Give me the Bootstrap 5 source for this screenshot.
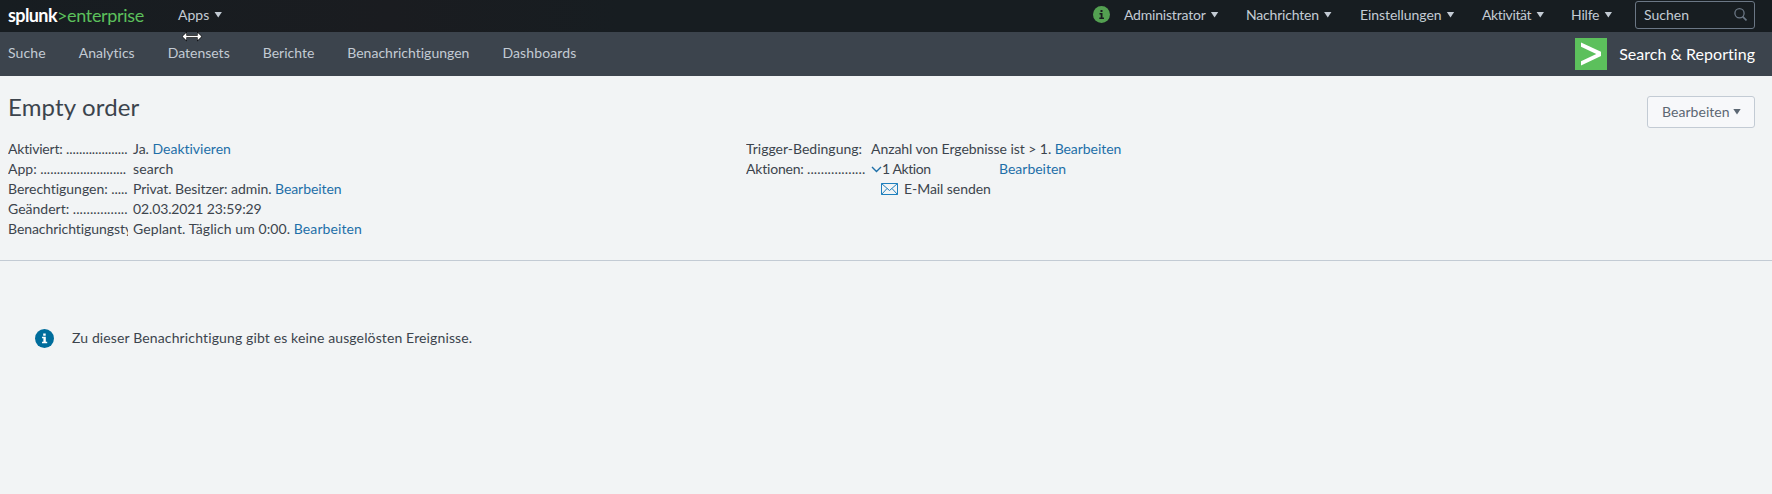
<!DOCTYPE html>
<html lang="de">
<head>
<meta charset="utf-8">
<meta name="viewport" content="width=device-width, initial-scale=1">
<title>Empty order | Splunk</title>
<link href="https://cdn.jsdelivr.net/npm/bootstrap@5.3.0/dist/css/bootstrap.min.css" rel="stylesheet">
<style>
body{font:14px/20px Lato,"Open Sans",sans-serif;font-variant-ligatures:none;color:#3c444d;background:#f2f4f5;min-height:494px;overflow:hidden}
a{color:#1e6fa8;text-decoration:none}
svg{display:block;flex:none}
.topbar{height:32px;background:#171d21;background:linear-gradient(90deg,#171d21,#1a1c20 22%,#171d21 35%);color:#c3cbd4;padding:0 17px 3px 8px;position:relative}
.appbar{height:44px;background:#3c444d;padding:0 17px 0 8px}
.appbar .nav{padding-bottom:2px}
.appbar .nav-link{color:#c3cbd4;padding:0 33px 0 0;line-height:20px}
.brand{font-size:18px;line-height:24px;color:#fff;width:170px}
.brand b{font-weight:700;letter-spacing:-.6px}
.brand span{color:#5cc05c;letter-spacing:-.32px}
.caret{width:8px;height:6px;margin-left:5px;background:currentColor;clip-path:polygon(0 0,100% 0,50% 100%)}
.tight{letter-spacing:-.2px}
.snug{letter-spacing:-.06px}
.loose{letter-spacing:.13px}
.menu-admin{width:122px}.menu-msg{width:114px}.menu-set{width:122px}.menu-act{width:89px}.menu-help{width:64px}
.search-box{width:120px;height:28px;border:1px solid #6b7785;border-radius:3px;padding:0 7px 0 8px;color:#c3cbd4}
.resize{position:absolute;left:181px;top:30px}
.app-name{font-size:16px;color:#fff;margin-left:12px;letter-spacing:.03px}
.title{font-size:24px;line-height:30px;font-weight:400;margin:0;padding-top:16px;letter-spacing:.15px}
.btn-edit{width:108px;height:32px;border:1px solid #c3cbd4;border-radius:3px;background:#f7f8fa;color:#5c6773;font-size:14px;line-height:20px;padding:0 13px 1px 14px;margin-top:20px;letter-spacing:.05px}
.term{width:120px;overflow:hidden;white-space:nowrap;margin-right:5px;flex:none}
.details{padding:0 8px 21px;border-bottom:1px solid #c3cbd4}
.left-col{width:738px}
.action-name{width:117px;letter-spacing:-.4px}
.notice{padding:67px 35px 0;gap:18px}
</style>
</head>
<body>
<header>
  <div class="topbar d-flex align-items-center">
    <a class="brand d-block" href="#"><b>splunk</b><span>&gt;enterprise</span></a>
    <div class="d-flex align-items-center me-auto"><span>Apps</span><i class="caret"></i></div>
    <svg width="31" height="17" viewBox="0 0 31 17"><circle cx="8.500" cy="8.500" r="8.500" fill="#53a051"/><path d="M7.500 4h2v2h-2zM6.500 7h3v4.500H11V13H6.300v-1.500h1.400v-3H6.500z" fill="#1a1c20"/></svg>
    <div class="menu-admin d-flex align-items-center"><span class="tight">Administrator</span><i class="caret"></i></div>
    <div class="menu-msg d-flex align-items-center"><span class="tight">Nachrichten</span><i class="caret"></i></div>
    <div class="menu-set d-flex align-items-center"><span class="snug">Einstellungen</span><i class="caret"></i></div>
    <div class="menu-act d-flex align-items-center"><span style="letter-spacing:-.35px">Aktivität</span><i class="caret"></i></div>
    <div class="menu-help d-flex align-items-center"><span class="tight">Hilfe</span><i class="caret"></i></div>
    <div class="search-box d-flex align-items-center justify-content-between"><span>Suchen</span>
      <svg width="13" height="13" viewBox="0 0 13 13" fill="none" stroke="#6b7785" stroke-width="1.300"><circle cx="5.500" cy="5.300" r="4.600"/><path d="M8.700 8.600l3.800 3.800" stroke-width="1.700"/></svg>
    </div>
    <svg class="resize" width="24" height="14" viewBox="0 0 24 14"><path d="M.8 6.500l5-5v3.500h10.400v-3.500l5 5-5 5V8H5.800v3.500z" fill="#000"/><path d="M1.500 6.500l3.800-3.700v3h11.400v-3l3.800 3.700-3.800 3.700v-3H5.300v3z" fill="#fff"/></svg>
  </div>
  <nav class="appbar d-flex align-items-center">
    <div class="nav flex-nowrap me-auto">
      <a class="nav-link loose" href="#">Suche</a>
      <a class="nav-link" href="#">Analytics</a>
      <a class="nav-link" href="#">Datensets</a>
      <a class="nav-link" href="#">Berichte</a>
      <a class="nav-link" href="#">Benachrichtigungen</a>
      <a class="nav-link loose" href="#">Dashboards</a>
    </div>
    <svg width="32" height="32" viewBox="0 0 32 32"><path fill="#5cc05c" d="M0 0h32v32H0z"/><path fill="#fff" d="M6 4.500l20 9.300v4.200L6 27.500v-4.300l15.300-7.300L6 8.800z"/></svg>
    <span class="app-name">Search &amp; Reporting</span>
  </nav>
</header>
<main>
  <div class="d-flex justify-content-between ps-2" style="height:63px;padding-right:17px">
    <h1 class="title">Empty order</h1>
    <button class="btn-edit d-flex align-items-center justify-content-between" type="button">Bearbeiten<i class="caret ms-0"></i></button>
  </div>
  <section class="details d-flex">
    <div class="left-col">
      <div class="d-flex"><div class="term"><span class="tight">Aktiviert: </span><span class="snug">...................</span></div><div>Ja. <a href="#">Deaktivieren</a></div></div>
      <div class="d-flex"><div class="term"><span>App: </span>..........................</div><div class="loose">search</div></div>
      <div class="d-flex"><div class="term" style="letter-spacing:-.03px">Berechtigungen: .....</div><div class="snug">Privat. Besitzer: admin. <a href="#">Bearbeiten</a></div></div>
      <div class="d-flex"><div class="term"><span>Geändert: </span><span class="loose">................</span></div><div style="letter-spacing:-.12px">02.03.2021 23:59:29</div></div>
      <div class="d-flex"><div class="term snug">Benachrichtigungstyp:</div><div style="letter-spacing:.09px">Geplant. Täglich um 0:00. <a href="#">Bearbeiten</a></div></div>
    </div>
    <div>
      <div class="d-flex"><div class="term">Trigger-Bedingung:</div><div class="snug">Anzahl von Ergebnisse ist &gt; 1. <a href="#">Bearbeiten</a></div></div>
      <div class="d-flex"><div class="term"><span class="tight">Aktionen: </span><span class="loose">.................</span></div>
        <svg class="mt-1" width="11" height="14" viewBox="0 0 11 14" fill="none" stroke="#1e6fa8" stroke-width="1.400"><path d="M1 4l4.500 4.500L10 4"/></svg>
        <div class="action-name">1 Aktion</div><a href="#">Bearbeiten</a></div>
      <div class="d-flex align-items-center"><div class="term"></div>
        <svg style="margin:0 6px 0 10px" width="17" height="12" viewBox="0 0 17 12" fill="none" stroke="#1e7fbd" stroke-width="1"><path d="M.5.500h16v11H.500zM.5.500l8 7 8-7M.5 11.500l5.500-6M16.500 11.500l-5.500-6"/></svg>
        <div class="snug">E-Mail senden</div></div>
    </div>
  </section>
  <div class="notice d-flex align-items-center">
    <svg width="19" height="19" viewBox="0 0 19 19"><circle cx="9.500" cy="9.500" r="9.500" fill="#006d9c"/><path d="M8.200 4.500h2.500v2.200H8.200zM7 7.700h3.800v5h1.400v1.500H7v-1.500h1.400V9.200H7z" fill="#fff"/></svg>
    <span class="loose">Zu dieser Benachrichtigung gibt es keine ausgelösten Ereignisse.</span>
  </div>
</main>
<script src="https://cdn.jsdelivr.net/npm/bootstrap@5.3.0/dist/js/bootstrap.bundle.min.js"></script>
</body>
</html>
